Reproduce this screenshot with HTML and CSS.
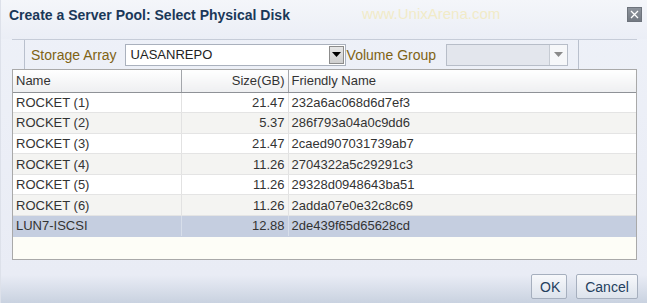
FILE: index.html
```html
<!DOCTYPE html>
<html lang="en">
<head>
  <meta charset="UTF-8">
  <title>Create a Server Pool: Select Physical Disk</title>
  <link rel="stylesheet" href="styles.css">
</head>
<body>
  <div class="dialog">

    <div class="titlebar">
      <h1>Create a Server Pool: Select Physical Disk</h1>
      <span class="watermark">www.UnixArena.com</span>
      <button class="close" title="Close">
        <svg width="9" height="9" viewBox="0 0 9 9"><path d="M1 1L8 8M8 1L1 8" stroke="#fff" stroke-width="1.3" fill="none"/></svg>
      </button>
    </div>

    <div class="toolbar">
      <div class="grip"></div>
      <label class="field-label">Storage Array</label>
      <div class="select wide">
        <span class="value">UASANREPO</span>
        <span class="arrow dark"><svg width="9" height="5" viewBox="0 0 9 5"><path d="M0 0H9L4.5 5Z" fill="#000"/></svg></span>
      </div>
      <label class="field-label">Volume Group</label>
      <div class="select narrow disabled">
        <span class="value"></span>
        <span class="arrow"><svg width="9" height="5" viewBox="0 0 9 5"><path d="M0 0H9L4.5 5Z" fill="#8a8a8a"/></svg></span>
      </div>
      <div class="sep"></div>
    </div>

    <div class="grid">
      <table>
        <thead>
          <tr>
            <th class="c-name">Name</th>
            <th class="c-size">Size(GB)</th>
            <th class="c-friendly">Friendly Name</th>
          </tr>
        </thead>
        <tbody>
          <tr><td>ROCKET (1)</td><td class="num">21.47</td><td>232a6ac068d6d7ef3</td></tr>
          <tr><td>ROCKET (2)</td><td class="num">5.37</td><td>286f793a04a0c9dd6</td></tr>
          <tr><td>ROCKET (3)</td><td class="num">21.47</td><td>2caed907031739ab7</td></tr>
          <tr><td>ROCKET (4)</td><td class="num">11.26</td><td>2704322a5c29291c3</td></tr>
          <tr><td>ROCKET (5)</td><td class="num">11.26</td><td>29328d0948643ba51</td></tr>
          <tr><td>ROCKET (6)</td><td class="num">11.26</td><td>2adda07e0e32c8c69</td></tr>
          <tr class="selected"><td>LUN7-ISCSI</td><td class="num">12.88</td><td>2de439f65d65628cd</td></tr>
        </tbody>
      </table>
    </div>

    <div class="footer">
      <button class="btn ok">OK</button>
      <button class="btn cancel">Cancel</button>
    </div>

  </div>
</body>
</html>
```

FILE: styles.css
```css
* {
  box-sizing: border-box;
}
body {
  margin: 0;
  font-family: 'Liberation Sans', Arial, sans-serif;
  font-size: 13px;
  color: #333;
  background: #e9ecf5;
}
.dialog {
  width: 647px;
  height: 303px;
  background: linear-gradient(#eef1f8 0, #e9ecf5 275px, #c9d2e0 303px);
  border-left: 1px solid #dde1ea;
  display: flex;
  flex-direction: column;
}

/* title bar */
.titlebar {
  height: 39px;
  display: flex;
  align-items: flex-start;
  padding: 6px 5px 0 8px;
  background: linear-gradient(#f4f6fa, #ebeef6);
}
.titlebar h1 {
  margin: 0;
  font-size: 14px;
  line-height: 18px;
  font-weight: bold;
  color: #1a3858;
}
.watermark {
  margin-left: 72px;
  margin-top: -1px;
  font-size: 15px;
  line-height: 18px;
  color: #f1ebc8;
}
.close {
  margin-left: auto;
  margin-top: 1px;
  width: 15px;
  height: 15px;
  padding: 0;
  border: 1px solid #6d737c;
  background: linear-gradient(#8d939c, #737982);
  display: flex;
  align-items: center;
  justify-content: center;
}

/* toolbar */
.toolbar {
  margin: 0 10px 0 11px;
  height: 30px;
  border-top: 1px solid #c6ccd8;
  display: flex;
  align-items: center;
}
.grip {
  width: 13px;
  height: 100%;
  border-right: 1px solid #b9c0cd;
}
.field-label {
  color: #7f6314;
  font-size: 14px;
  margin: 0 8px 0 6px;
}
.select {
  height: 22px;
  display: flex;
  align-items: stretch;
  background: #fff;
  border: 1px solid #aab1bd;
}
.select.wide {
  width: 221px;
}
.select.narrow {
  width: 122px;
  margin-left: 2px;
}
.select.disabled {
  background: #e3e6ed;
  border-color: #b7bdc8;
}
.select .value {
  flex: 1;
  padding-left: 5px;
  font-size: 13px;
  line-height: 20px;
  color: #222;
}
.arrow {
  width: 18px;
  display: flex;
  align-items: center;
  justify-content: center;
  border-left: 1px solid #c6cbd3;
  background: #f6f7f9;
}
.arrow.dark {
  width: 15px;
  margin: 1px 1px 1px 0;
  border: 1px solid #8c8c8c;
  background: linear-gradient(#e6e6e6, #cfcfcf);
}
.select.wide + .field-label {
  margin-left: 1px;
}
.sep {
  width: 1px;
  height: 100%;
  margin-left: 10px;
  background: #b9c0cd;
}

/* grid */
.grid {
  margin: 0 10px 0 11px;
  height: 191px;
  border: 1px solid #a9a9a9;
  background: #fdfdf7;
}
table {
  width: 100%;
  border-collapse: collapse;
  table-layout: fixed;
}
th {
  height: 22px;
  font-weight: normal;
  text-align: left;
  padding: 0 3px;
  background: linear-gradient(#ffffff, #eeeff1);
  border-bottom: 1px solid #8f9297;
  border-right: 1px solid #a3a6ab;
  color: #333;
}
th.c-name {
  width: 168px;
}
th.c-size {
  width: 107px;
  text-align: right;
}
th.c-friendly {
  border-right: none;
}
td {
  height: 20.6px;
  padding: 0 3px;
  border-bottom: 1px solid #e4e4e4;
  border-right: 1px solid #e2e2e2;
  white-space: nowrap;
  color: #333;
}
td:last-child {
  border-right: none;
}
td.num {
  text-align: right;
}
tbody tr {
  background: #fff;
}
tbody tr:nth-child(even) {
  background: #f4f4f2;
}
tbody tr.selected {
  background: #c5cee0;
}
tbody tr.selected td {
  border-bottom-color: #c5cee0;
  border-right-color: #d7deea;
}

/* footer */
.footer {
  flex: 1;
  display: flex;
  justify-content: flex-end;
  align-items: flex-start;
  gap: 9px;
  padding: 14px 9px 0 0;
}
.btn {
  height: 25px;
  font-family: 'Liberation Sans', Arial, sans-serif;
  font-size: 14px;
  color: #24405e;
  border: 1px solid #a6afbe;
  border-radius: 2px;
  background: linear-gradient(#f7f8fb, #dde3ec);
  padding: 0 8px;
}
.btn.ok {
  width: 36px;
}
.btn.cancel {
  width: 62px;
}
```
